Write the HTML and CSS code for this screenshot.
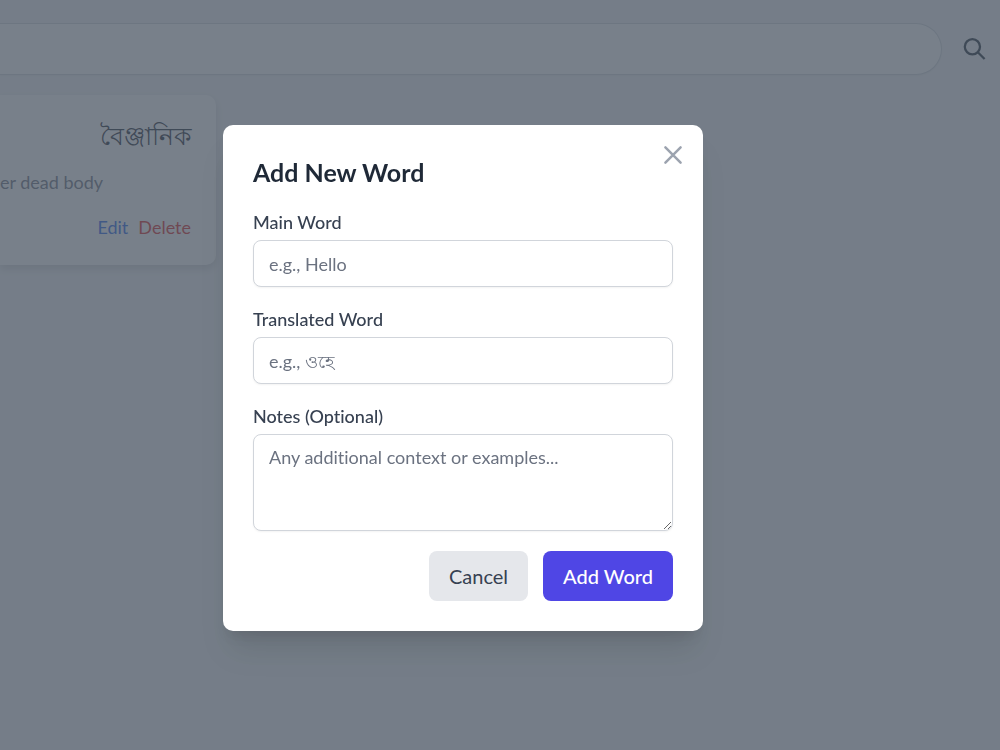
FILE: index.html
```html
<!DOCTYPE html>
<html lang="en">
<head>
    <meta charset="UTF-8">
    <meta name="viewport" content="width=device-width, initial-scale=1.0">
    <title>Dictionary</title>
    <link rel="stylesheet" href="styles.css">
</head>
<body>

<!-- Search bar -->
<header class="topbar">
    <input class="search-input" type="search" aria-label="Search words">
    <button class="search-button" type="button" aria-label="Search">
        <svg viewBox="0 0 24 24" width="24" height="24" fill="none" stroke="currentColor" stroke-width="2.3">
            <circle cx="10.4" cy="9.8" r="7.6"/>
            <path d="M15.8 15.2L22.6 22"/>
        </svg>
    </button>
</header>

<!-- Word list -->
<main class="words">
    <article class="word-card">
        <h3 class="word-translation" lang="bn">বৈঞ্জানিক</h3>
        <p class="word-notes">er dead body</p>
        <div class="word-actions">
            <a class="edit" href="#">Edit</a>
            <a class="delete" href="#">Delete</a>
        </div>
    </article>
</main>

<!-- Add word modal -->
<div class="overlay">
    <div class="modal" role="dialog" aria-labelledby="modalTitle">
        <button class="close-button" type="button" aria-label="Close">
            <svg viewBox="0 0 30 30" width="30" height="30" fill="none" stroke="currentColor" stroke-width="2.5" stroke-linecap="round">
                <path d="M7.4 7.4L22.6 22.6M22.6 7.4L7.4 22.6"/>
            </svg>
        </button>
        <h2 class="modal-title" id="modalTitle">Add New Word</h2>
        <form class="word-form">
            <div class="field">
                <label for="mainWord">Main Word</label>
                <input id="mainWord" type="text" placeholder="e.g., Hello">
            </div>
            <div class="field">
                <label for="translatedWord">Translated Word</label>
                <input id="translatedWord" type="text" placeholder="e.g., ওহে">
            </div>
            <div class="field">
                <label for="notes">Notes (Optional)</label>
                <textarea id="notes" rows="3" placeholder="Any additional context or examples..."></textarea>
            </div>
            <div class="form-actions">
                <button class="btn btn-cancel" type="button">Cancel</button>
                <button class="btn btn-add" type="submit">Add Word</button>
            </div>
        </form>
    </div>
</div>

</body>
</html>
```
FILE: styles.css
```css
* {
    box-sizing: border-box;
}

body {
    margin: 0;
    min-height: 100vh;
    background-color: #f3f4f6;
    color: #1f2937;
    font-family: Lato, "Noto Sans", sans-serif;
    font-size: 18px;
    font-variant-ligatures: no-common-ligatures;
    line-height: 25px;
}

h2, h3, p {
    margin: 0;
}

button, input, textarea {
    font: inherit;
    font-variant-ligatures: inherit;
}

/* Search bar */
.topbar {
    display: flex;
    align-items: center;
    gap: 20px;
    padding: 23px 14px 0 0;
}

.search-input {
    flex: 1;
    height: 52px;
    padding: 0 20px;
    border: 1px solid #d1d5db;
    border-left: none;
    border-radius: 0 26px 26px 0;
    background-color: #fff;
    box-shadow: 0 1px 2px rgba(0, 0, 0, 0.05);
}

.search-button {
    display: flex;
    padding: 0;
    border: none;
    background: none;
    color: #1f2937;
}

/* Word list */
.words {
    display: grid;
    grid-template-columns: 216px;
    padding-top: 20px;
}

.word-card {
    padding: 20px 25px 25px 0;
    border-radius: 0 10px 10px 0;
    background-color: #fff;
    box-shadow: 0 4px 8px rgba(0, 0, 0, 0.15);
}

.word-translation {
    font-family: "Noto Sans", sans-serif;
    font-size: 25px;
    font-variant-ligatures: normal;
    font-weight: 500;
    line-height: 40px;
    text-align: right;
}

.word-notes {
    margin: 15px 0 20px;
    color: #6b7280;
}

.word-actions {
    display: flex;
    justify-content: flex-end;
    gap: 10px;
}

.word-actions a {
    text-decoration: none;
}

.edit {
    color: #2563eb;
}

.delete {
    color: #dc2626;
}

/* Modal */
.overlay {
    position: fixed;
    inset: 0;
    display: flex;
    align-items: center;
    justify-content: center;
    padding: 6px 74px 0 0;
    background-color: rgba(75, 85, 99, 0.75);
}

.modal {
    position: relative;
    width: 100%;
    max-width: 480px;
    padding: 30px;
    border-radius: 10px;
    background-color: #fff;
    box-shadow: 0 25px 31px -6px rgba(0, 0, 0, 0.1), 0 10px 13px -6px rgba(0, 0, 0, 0.1);
}

.close-button {
    position: absolute;
    top: 15px;
    right: 15px;
    display: flex;
    padding: 0;
    border: none;
    background: none;
    color: #9ca3af;
    cursor: pointer;
}

.modal-title {
    margin-bottom: 20px;
    font-size: 25px;
    font-weight: 700;
    line-height: 35px;
}

.word-form {
    display: flex;
    flex-direction: column;
    gap: 20px;
}

.field {
    display: flex;
    flex-direction: column;
    gap: 5px;
}

.field label {
    color: #374151;
    font-weight: 500;
}

.field input,
.field textarea {
    width: 100%;
    padding: 10px 15px;
    border: 1px solid #d1d5db;
    border-radius: 8px;
    background-color: #fff;
    box-shadow: 0 1px 2px rgba(0, 0, 0, 0.05);
}

.field input {
    height: 47px;
}

.field textarea {
    display: block;
    resize: vertical;
}

.field input::placeholder,
.field textarea::placeholder {
    color: #6b7280;
}

.form-actions {
    display: flex;
    justify-content: flex-end;
    gap: 15px;
}

.btn {
    padding: 10px 20px;
    border: none;
    border-radius: 8px;
    font-size: 20px;
    line-height: 30px;
    cursor: pointer;
}

.btn-cancel {
    background-color: #e5e7eb;
    color: #374151;
}

.btn-add {
    background-color: #4f46e5;
    color: #fff;
    font-weight: 500;
}
```
